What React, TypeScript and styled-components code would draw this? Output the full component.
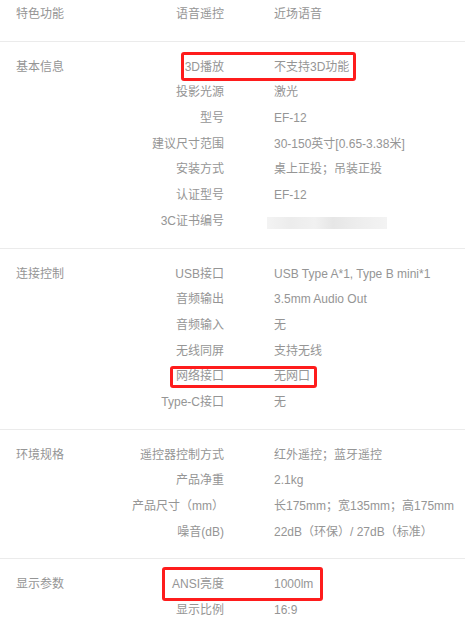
import React from "react";
import styled, { createGlobalStyle } from "styled-components";

const Global = createGlobalStyle`
  html, body { margin: 0; padding: 0; background: #fff; }
  body { overflow: hidden; }
`;

const Page = styled.div`
  width: 465px;
  margin-top: -11px;
  font-family: "Liberation Sans", "Noto Sans CJK SC", sans-serif;
  font-size: 12px;
  color: #959595;
`;

const Section = styled.section`
  display: flex;
  padding: 13px 0 13px 16px;
  border-bottom: 1px solid #ebebeb;
`;

const Category = styled.div`
  width: 84px;
  flex: none;
  line-height: 25.7px;
`;

const Rows = styled.div`
  flex: 1;
  display: flex;
  flex-direction: column;
`;

const Row = styled.div`
  position: relative;
  display: grid;
  grid-template-columns: 124px 1fr;
  column-gap: 50px;
  height: 25.7px;
  line-height: 25.7px;
  white-space: nowrap;
`;

const Key = styled.div`
  text-align: right;
`;

const Value = styled.div``;

const Mark = styled.div<{ $l: number; $t: number; $w: number; $h: number }>`
  position: absolute;
  left: ${(p) => p.$l}px;
  top: ${(p) => p.$t}px;
  width: ${(p) => p.$w}px;
  height: ${(p) => p.$h}px;
  box-sizing: border-box;
  border: 3px solid #fe1c1c;
  border-radius: 3px;
  pointer-events: none;
`;

const Redacted = styled.span`
  display: inline-block;
  vertical-align: middle;
  margin-left: -7px;
  margin-top: 2px;
  width: 120px;
  height: 12px;
  background: linear-gradient(
    90deg,
    #f3f3f3 0%,
    #ececec 20%,
    #f1f1f1 40%,
    #e6e6e6 55%,
    #ededed 75%,
    #f3f3f3 100%
  );
  filter: blur(0.6px);
`;

type Box = { l: number; t: number; w: number; h: number };
type Item = { k: string; v: React.ReactNode; box?: Box };
type Group = { title: string; items: Item[] };

const groups: Group[] = [
  { title: "特色功能", items: [{ k: "语音遥控", v: "近场语音" }] },
  {
    title: "基本信息",
    items: [
      { k: "3D播放", v: "不支持3D功能", box: { l: 81, t: -3, w: 175, h: 29 } },
      { k: "投影光源", v: "激光" },
      { k: "型号", v: "EF-12" },
      { k: "建议尺寸范围", v: "30-150英寸[0.65-3.38米]" },
      { k: "安装方式", v: "桌上正投；吊装正投" },
      { k: "认证型号", v: "EF-12" },
      { k: "3C证书编号", v: <Redacted /> },
    ],
  },
  {
    title: "连接控制",
    items: [
      { k: "USB接口", v: "USB Type A*1, Type B mini*1" },
      { k: "音频输出", v: "3.5mm Audio Out" },
      { k: "音频输入", v: "无" },
      { k: "无线同屏", v: "支持无线" },
      { k: "网络接口", v: "无网口", box: { l: 70, t: 2, w: 147, h: 22 } },
      { k: "Type-C接口", v: "无" },
    ],
  },
  {
    title: "环境规格",
    items: [
      { k: "遥控器控制方式", v: "红外遥控；蓝牙遥控" },
      { k: "产品净重", v: "2.1kg" },
      { k: "产品尺寸（mm）", v: "长175mm；宽135mm；高175mm" },
      { k: "噪音(dB)", v: "22dB（环保）/ 27dB（标准）" },
    ],
  },
  {
    title: "显示参数",
    items: [
      { k: "ANSI亮度", v: "1000lm", box: { l: 62, t: -5, w: 161, h: 34 } },
      { k: "显示比例", v: "16:9" },
    ],
  },
];

export default function App() {
  return (
    <Page>
      <Global />
      {groups.map((g) => (
        <Section key={g.title}>
          <Category>{g.title}</Category>
          <Rows>
            {g.items.map((it) => (
              <Row key={it.k}>
                <Key>{it.k}</Key>
                <Value>{it.v}</Value>
                {it.box && <Mark $l={it.box.l} $t={it.box.t} $w={it.box.w} $h={it.box.h} />}
              </Row>
            ))}
          </Rows>
        </Section>
      ))}
    </Page>
  );
}
